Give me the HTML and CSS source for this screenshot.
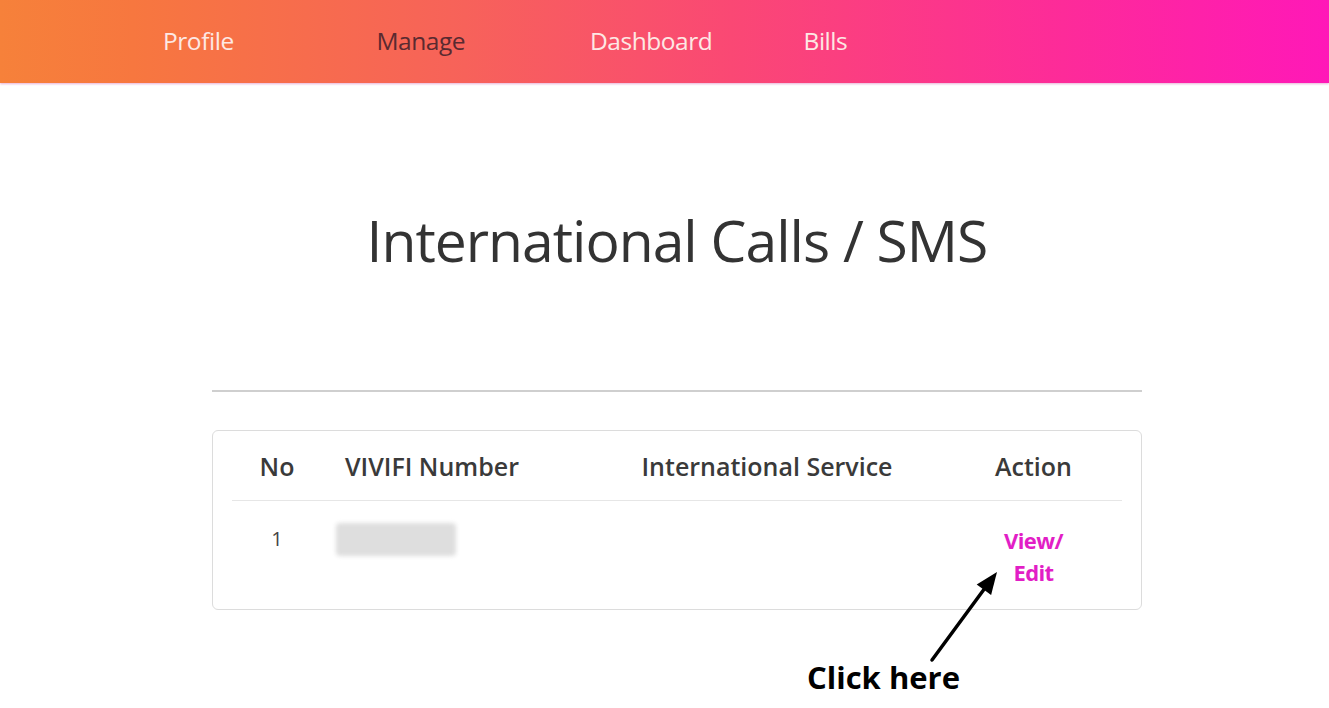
FILE: index.html
```html
<!DOCTYPE html>
<html lang="en">
<head>
    <meta charset="UTF-8">
    <meta name="viewport" content="width=device-width, initial-scale=1">
    <title>International Calls / SMS</title>
    <link rel="stylesheet" href="styles.css">
</head>
<body>

    <!-- Barra de navegação -->
    <nav class="topbar">
        <a href="#" class="nav-link">Profile</a>
        <a href="#" class="nav-link active">Manage</a>
        <a href="#" class="nav-link">Dashboard</a>
        <a href="#" class="nav-link">Bills</a>
    </nav>

    <main class="content">
        <h1 class="page-title">International Calls / SMS</h1>

        <hr class="divider">

        <div class="table-card">
            <div class="row head">
                <div class="cell c-no">No</div>
                <div class="cell c-num">VIVIFI Number</div>
                <div class="cell c-svc">International Service</div>
                <div class="cell c-act">Action</div>
            </div>
            <div class="row body">
                <div class="cell c-no">1</div>
                <div class="cell c-num"><span class="blurred"></span></div>
                <div class="cell c-svc"></div>
                <div class="cell c-act"><a href="#" class="action-link">View/<br>Edit</a></div>
            </div>
        </div>

        <!-- Indicação para o usuário -->
        <div class="hint">
            <svg class="hint-arrow" width="100" height="100" viewBox="0 0 100 100">
                <line x1="20" y1="90" x2="73" y2="18" stroke="#000" stroke-width="3.5" stroke-linecap="round"/>
                <polygon points="85,2 64.7,14.4 79.1,25" fill="#000"/>
            </svg>
            <span class="hint-text">Click here</span>
        </div>
    </main>

</body>
</html>
```

FILE: styles.css
```css
body {
    margin: 0;
    padding: 0;
    background-color: #ffffff;
    font-family: 'Open Sans', sans-serif;
    font-stretch: 90%;
    color: #333333;
}

/* Barra de navegação com degradê */
.topbar {
    height: 83px;
    display: flex;
    align-items: center;
    padding-left: 163px;
    background: linear-gradient(to right, #f6813a 0%, #f7773f 10%, #f7625a 35%, #fa4874 55%, #fd2b99 80%, #ff18b8 100%);
    box-shadow: 0 1px 2px rgba(200, 60, 150, 0.4);
}

.nav-link {
    font-size: 24.5px;
    letter-spacing: -0.45px;
    color: #fde8e4;
    text-decoration: none;
    width: 213.5px;
    line-height: 1;
}

.nav-link.active {
    color: #5a2a30;
}

.content {
    width: 930px;
    margin-left: 212px;
    position: relative;
}

.page-title {
    margin: 0;
    padding-top: 125px;
    text-align: center;
    font-size: 57px;
    letter-spacing: -1px;
    font-weight: 400;
    line-height: 64px;
    color: #333333;
}

.divider {
    margin: 118px 0 0 0;
    border: none;
    border-top: 2px solid #cfcfcf;
}

.table-card {
    margin-top: 38px;
    border: 1px solid #dcdcdc;
    border-radius: 6px;
    padding: 0 19px;
    height: 178px;
}

.row {
    display: grid;
    grid-template-columns: 90px 300px 290px 1fr;
}

.row.head {
    height: 69px;
    align-items: center;
    border-bottom: 1px solid #e6e6e6;
    font-size: 25px;
    font-weight: 600;
    color: #3a3a3a;
}

.row.body {
    padding-top: 22px;
    font-size: 20px;
    color: #444444;
}

.c-no {
    text-align: center;
}

.c-num {
    padding-left: 23px;
}

.c-svc {
    text-align: center;
}

.c-act {
    text-align: center;
    padding-left: 33px;
}

.row.body .c-no {
    padding-top: 2px;
}

.blurred {
    display: block;
    width: 120px;
    height: 33px;
    margin-left: -9px;
    background: #dedede;
    border-radius: 4px;
    filter: blur(2px);
}

.action-link {
    display: inline-block;
    padding-top: 1px;
    color: #e21ec6;
    font-weight: 700;
    font-size: 22px;
    letter-spacing: -0.6px;
    line-height: 32px;
    text-decoration: none;
}

.hint {
    position: relative;
    height: 98px;
}

.hint-arrow {
    position: absolute;
    left: 700px;
    top: -40px;
}

.hint-text {
    position: absolute;
    left: 595px;
    top: 49px;
    font-size: 31px;
    font-weight: 700;
    color: #000000;
    line-height: 36px;
}
```
